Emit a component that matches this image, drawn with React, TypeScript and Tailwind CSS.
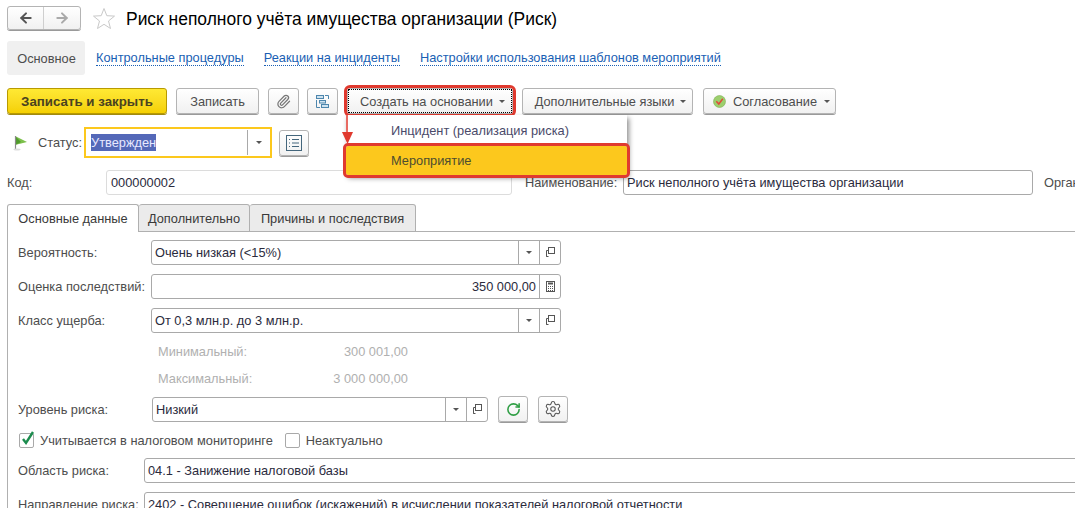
import { ArrowLeft, ArrowRight, Paperclip, RotateCw, Settings } from 'lucide-react';
import type { ReactNode } from 'react';

const btn =
  'flex items-center justify-center rounded-[3px] border border-[#b4b4b4] bg-gradient-to-b from-white to-[#f1f1f1] shadow-[0_1px_0_#9a9a9a] text-[#4d4d4d]';

function Caret({ className = '' }: { className?: string }) {
  return <span className={`inline-block h-0 w-0 border-x-[3px] border-t-[3px] border-x-transparent border-t-[#555] ${className}`} />;
}

function OpenIcon() {
  return (
    <svg width="13" height="13" viewBox="0 0 13 13" fill="none" stroke="#555" strokeWidth="1">
      <rect x="4.5" y="1.5" width="6" height="6" />
      <path d="M4.5 4.5H2.5V10.5M2.5 8.5V10.5H4.5" />
    </svg>
  );
}

function CalcIcon() {
  return (
    <svg width="11" height="13" viewBox="0 0 11 13" fill="none" stroke="#555" strokeWidth="1">
      <rect x="1.5" y="1.5" width="8" height="10" />
      <path d="M3 3.5H8" strokeWidth="2" />
      <path d="M3 6.5H4M5 6.5H6M7 6.5H8M3 8.5H4M5 8.5H6M7 8.5H8M3 10.5H4M5 10.5H6M7 10.5H8" />
    </svg>
  );
}

function Star() {
  return (
    <svg width="24" height="23" viewBox="0 0 24 23" fill="#fff" stroke="#c9c9c9" strokeWidth="1">
      <path d="M12 1.5L14.8 8.7L22.5 9.1L16.5 14L18.5 21.5L12 17.3L5.5 21.5L7.5 14L1.5 9.1L9.2 8.7Z" />
    </svg>
  );
}

function Flag() {
  return (
    <svg width="15" height="16" viewBox="0 0 15 16">
      <path d="M2 1L14 7L2 10Z" fill="#7cc04b" />
      <path d="M2 1L8 7L2 10Z" fill="#4f9a2c" />
      <path d="M2.5 1V14" stroke="#8a8a8a" strokeWidth="1.2" />
      <ellipse cx="4" cy="14.5" rx="3.5" ry="1" fill="#ddd" />
    </svg>
  );
}

function StructureIcon() {
  return (
    <svg width="15" height="15" viewBox="0 0 15 15" fill="none" stroke="#4d86ad" strokeWidth="1">
      <rect x="1.5" y="1.5" width="7" height="3" fill="#cfe3f0" />
      <rect x="4.5" y="6.5" width="6" height="2.5" fill="#cfe3f0" />
      <rect x="6.5" y="10.5" width="7" height="3" fill="#cfe3f0" />
      <path d="M10 1.5H13.5V5M1.5 6V13.5H5" />
    </svg>
  );
}

function ListIcon() {
  return (
    <svg width="16" height="16" viewBox="0 0 16 16" fill="none" stroke="#44667c" strokeWidth="1">
      <rect x="0.5" y="0.5" width="15" height="15" />
      <path d="M3 4.5H4M6 4.5H13M3 8H4M6 8H13M3 11.5H4M6 11.5H13" />
    </svg>
  );
}

function ApprovalIcon() {
  return (
    <svg width="13" height="13" viewBox="0 0 13 13">
      <circle cx="6.5" cy="6.5" r="6" fill="#9ccf6d" stroke="#7fae52" strokeWidth="0.6" />
      <path d="M3.3 6.2L5.8 9L9.8 3.8" fill="none" stroke="#e2483a" strokeWidth="1.5" />
    </svg>
  );
}

function Field({
  label,
  labelWidth,
  width,
  children,
  right = false,
  buttons,
}: {
  label: string;
  labelWidth: string;
  width: string;
  children: ReactNode;
  right?: boolean;
  buttons: ReactNode;
}) {
  return (
    <div className="flex h-[25px] items-center">
      <span className={`shrink-0 text-[#4d4d4d] ${labelWidth}`}>{label}</span>
      <div className={`flex h-[25px] shrink-0 items-stretch rounded-[3px] border border-[#a9a9a9] bg-white ${width}`}>
        <span className={`min-w-0 flex-1 self-center whitespace-nowrap px-[3px] text-[#2b2b3d] ${right ? 'text-right' : ''}`}>
          {children}
        </span>
        {buttons}
      </div>
    </div>
  );
}

const dropOpen = (
  <>
    <span className="flex w-[21px] items-center justify-center border-l border-[#a9a9a9]">
      <Caret />
    </span>
    <span className="flex w-[21px] items-center justify-center border-l border-[#a9a9a9]">
      <OpenIcon />
    </span>
  </>
);

function Check({ checked = false }: { checked?: boolean }) {
  return (
    <span className="relative block h-[15px] w-[15px] shrink-0 rounded-[2px] border border-[#a9a9a9] bg-white">
      {checked && (
        <svg className="absolute -top-[4px] left-[1px]" width="14" height="16" viewBox="0 0 14 16" fill="none">
          <path d="M2 9L5 13L12 2" stroke="#1c8c4e" strokeWidth="2.4" />
        </svg>
      )}
    </span>
  );
}

export default function App() {
  return (
    <div className="relative h-[508px] w-[1075px] overflow-hidden bg-white font-['Liberation_Sans',Arial,sans-serif] text-[12.8px] leading-[15px]">
      {/* шапка */}
      <div className="flex h-[41px] items-start pl-[7px] pt-[6px]">
        <div className={`${btn} h-[24px] w-[74px]`}>
          <span className="flex h-full w-[37px] items-center justify-center border-r border-[#cfcfcf]">
            <ArrowLeft size={16} strokeWidth={3} color="#555" />
          </span>
          <span className="flex h-full w-[37px] items-center justify-center">
            <ArrowRight size={16} strokeWidth={3} color="#aaa" />
          </span>
        </div>
        <span className="ml-[11px] mt-[1px]">
          <Star />
        </span>
        <h1 className="ml-[10px] mt-[3px] whitespace-nowrap text-[17.45px] font-normal leading-[20px] text-black">
          Риск неполного учёта имущества организации (Риск)
        </h1>
      </div>

      {/* панель навигации */}
      <div className="flex h-[34px] items-center pl-[7px]">
        <span className="flex h-full w-[78px] items-center justify-center rounded-[3px] bg-[#f0f0f0] pl-[1px] text-[#4d4d4d]">Основное</span>
        <a className="ml-[11px] border-b border-dotted border-[#1a5fb4] text-[#1a5fb4]">Контрольные процедуры</a>
        <a className="ml-[20px] border-b border-dotted border-[#1a5fb4] text-[#1a5fb4]">Реакции на инциденты</a>
        <a className="ml-[20px] border-b border-dotted border-[#1a5fb4] text-[#1a5fb4]">Настройки использования шаблонов мероприятий</a>
      </div>

      {/* командная панель */}
      <div className="mt-[13px] flex h-[26px] items-stretch pl-[7px]">
        <button className="w-[160px] rounded-[3px] border border-[#b89a00] bg-gradient-to-b from-[#ffe933] to-[#f5d000] text-[13.3px] font-bold text-[#4a4320] shadow-[0_1px_0_#a08a10]">
          Записать и закрыть
        </button>
        <button className={`${btn} ml-[9px] w-[83px]`}>Записать</button>
        <button className={`${btn} ml-[9px] w-[31px]`}>
          <Paperclip size={15} color="#777" />
        </button>
        <button className={`${btn} ml-[8px] w-[31px]`}>
          <StructureIcon />
        </button>
        <button className={`${btn} ml-[9px] w-[166px] outline-[3px] outline-[#e03a2f]`}>
          <span className="flex h-full w-full items-center justify-center gap-[6px] border border-dotted border-black pl-[5px]">
            Создать на основании
            <Caret />
          </span>
        </button>
        <button className={`${btn} ml-[9px] w-[171px] gap-[6px] pl-[6px]`}>
          Дополнительные языки
          <Caret />
        </button>
        <button className={`${btn} ml-[10px] w-[133px] gap-[7px] pl-[4px]`}>
          <ApprovalIcon />
          Согласование
          <Caret />
        </button>
      </div>

      {/* статус */}
      <div className="mt-[13px] flex h-[31px] items-center pl-[13px]">
        <Flag />
        <span className="ml-[10px] w-[46px] text-[#4d4d4d]">Статус:</span>
        <div className="flex h-[31px] w-[188px] items-center border-2 border-[#fcc81d] bg-white pl-[5px]">
          <span className="flex-1">
            <span className="bg-[#5468b8] py-[1px] text-[#e8e8ff]">Утвержден</span>
          </span>
          <span className="flex h-[25px] w-[23px] items-center justify-center border-l border-[#a9a9a9]">
            <Caret />
          </span>
        </div>
        <button className={`${btn} ml-[7px] h-[26px] w-[30px]`}>
          <ListIcon />
        </button>
      </div>

      {/* код и наименование */}
      <div className="mt-[12px] flex h-[25px] items-center pl-[7px]">
        <span className="w-[99px] shrink-0 text-[#4d4d4d]">Код:</span>
        <div className="flex h-full w-[406px] shrink-0 items-center rounded-[3px] border border-[#dcdcdc] pl-[4px] text-[#2b2b3d]">000000002</div>
        <span className="ml-[13px] w-[98px] shrink-0 whitespace-nowrap text-[#4d4d4d]">Наименование:</span>
        <div className="flex h-full w-[410px] shrink-0 items-center rounded-[3px] border border-[#a9a9a9] pl-[3px] text-[#2b2b3d]">
          Риск неполного учёта имущества организации
        </div>
        <span className="ml-[11px] shrink-0 whitespace-nowrap text-[#4d4d4d]">Организация:</span>
      </div>

      {/* вкладки */}
      <div className="mt-[9px] flex h-[28px] pl-[7px]">
        <div className="flex w-[132px] items-center justify-center rounded-t-[3px] border border-b-0 border-[#b0b0b0] bg-white text-[#3a3a3a]">Основные данные</div>
        <div className="flex w-[111px] items-center justify-center rounded-t-[3px] border border-l-0 border-[#b0b0b0] bg-[#ebebeb] text-[#3a3a3a]">Дополнительно</div>
        <div className="flex w-[166px] items-center justify-center rounded-t-[3px] border border-l-0 border-[#b0b0b0] bg-[#ebebeb] text-[#3a3a3a]">Причины и последствия</div>
        <div className="flex-1 border-b border-[#b0b0b0]" />
      </div>

      {/* содержимое вкладки */}
      <div className="ml-[7px] flex h-[300px] flex-col border-l border-[#b0b0b0] pl-[10px] pt-[8px]">
        <div className="flex flex-col gap-[9px]">
          <Field label="Вероятность:" labelWidth="w-[133px]" width="w-[410px]" buttons={dropOpen}>
            Очень низкая (&lt;15%)
          </Field>
          <Field
            label="Оценка последствий:"
            labelWidth="w-[133px]"
            width="w-[410px]"
            right
            buttons={
              <span className="flex w-[21px] items-center justify-center border-l border-[#a9a9a9]">
                <CalcIcon />
              </span>
            }
          >
            350 000,00
          </Field>
          <Field label="Класс ущерба:" labelWidth="w-[133px]" width="w-[410px]" buttons={dropOpen}>
            От 0,3 млн.р. до 3 млн.р.
          </Field>
        </div>

        <div className="mt-[12px] flex h-[12px] w-[390px] items-center justify-between pl-[140px] text-[#b0b0b0]">
          <span>Минимальный:</span>
          <span>300 001,00</span>
        </div>
        <div className="mt-[15px] flex h-[12px] w-[390px] items-center justify-between pl-[140px] text-[#b0b0b0]">
          <span>Максимальный:</span>
          <span>3 000 000,00</span>
        </div>

        <div className="mt-[12px] flex items-center">
          <Field label="Уровень риска:" labelWidth="w-[134px]" width="w-[336px]" buttons={dropOpen}>
            Низкий
          </Field>
          <button className={`${btn} ml-[10px] h-[26px] w-[30px]`}>
            <RotateCw size={15} strokeWidth={2.5} color="#2f9e44" />
          </button>
          <button className={`${btn} ml-[10px] h-[26px] w-[30px]`}>
            <Settings size={18} strokeWidth={1.4} color="#555" />
          </button>
        </div>

        <div className="mt-[10px] flex h-[16px] items-center text-[#4d4d4d]">
          <span className="ml-[1px]">
            <Check checked />
          </span>
          <span className="ml-[6px]">Учитывается в налоговом мониторинге</span>
          <span className="ml-[12px]">
            <Check />
          </span>
          <span className="ml-[6px]">Неактуально</span>
        </div>

        <div className="mt-[10px] flex h-[25px] items-center">
          <span className="w-[126px] shrink-0 text-[#4d4d4d]">Область риска:</span>
          <div className="flex h-full w-[1000px] shrink-0 items-center rounded-[3px] border border-[#a9a9a9] pl-[3px] text-[#2b2b3d]">04.1 - Занижение налоговой базы</div>
        </div>
        <div className="mt-[9px] flex h-[25px] items-center">
          <span className="w-[126px] shrink-0 whitespace-nowrap text-[#4d4d4d]">Направление риска:</span>
          <div className="flex h-full w-[1000px] shrink-0 items-center rounded-[3px] border border-[#a9a9a9] pl-[3px] text-[#2b2b3d]">
            2402 - Совершение ошибок (искажений) в исчислении показателей налоговой отчетности
          </div>
        </div>
      </div>

      {/* выпадающее меню */}
      <div className="absolute left-[346px] top-[115px] w-[281px] bg-white shadow-[2px_3px_5px_rgba(0,0,0,0.45)]">
        <div className="flex h-[31px] items-center pl-[45px] text-[#4a4a6a]">Инцидент (реализация риска)</div>
        <div className="flex h-[29px] items-center rounded-[2px] bg-[#fcc81d] pl-[45px] text-[#4d4d30] outline-[3px] outline-[#e03a2f]">Мероприятие</div>
      </div>

      {/* стрелка-указатель */}
      <svg className="absolute left-[341px] top-[114px]" width="14" height="32" viewBox="0 0 14 32">
        <path d="M6 0V20" stroke="#e03a2f" strokeWidth="1.5" />
        <path d="M1 18H12L6.5 30Z" fill="#e03a2f" />
      </svg>
    </div>
  );
}
